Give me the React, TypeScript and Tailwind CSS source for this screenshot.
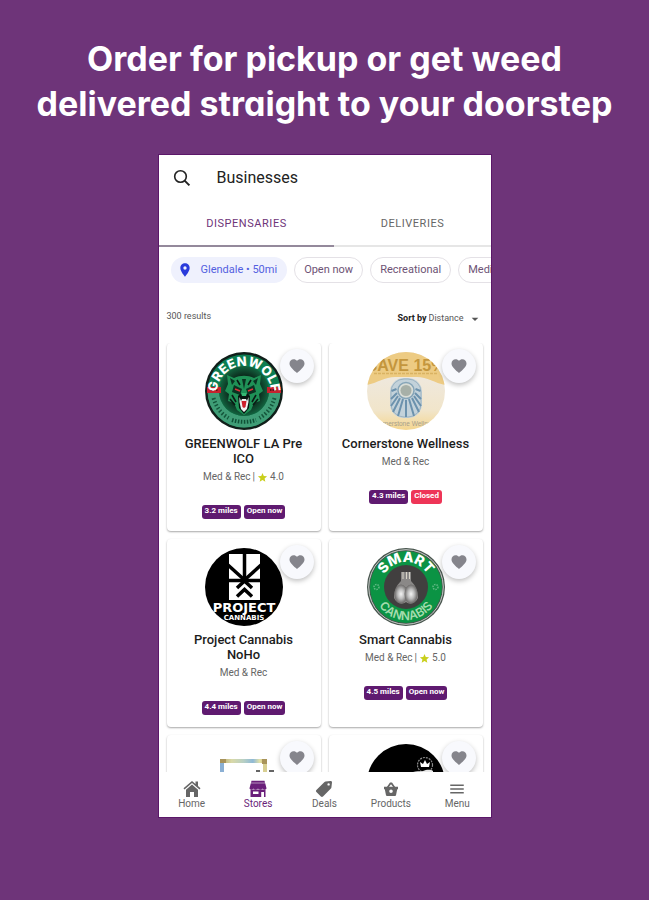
import React from 'react';
import { MdArrowDropDown, MdFavorite, MdMenu, MdPlace, MdStar } from 'react-icons/md';

type Store = {
  id: string;
  name: string;
  type: string;
  rating?: string;
  distance: string;
  open: boolean;
  Logo: React.FC;
};

const GreenwolfLogo: React.FC = () => (
  <svg viewBox="0 0 78 78" className="h-full w-full">
    <defs>
      <path id="gw-top" d="M12 41a27 27 0 0 1 54 0" />
      <radialGradient id="gw-glow">
        <stop offset="0.500" stopColor="#0a1712" />
        <stop offset="1" stopColor="#12643f" />
      </radialGradient>
    </defs>
    <circle cx="39" cy="39" r="39" fill="#111f1a" />
    <circle cx="39" cy="39" r="36.500" fill="#0d7d50" />
    <path d="M2.500 39a36.500 36.500 0 0 0 73 0H64a25 25 0 0 1-50 0z" fill="#3f9d76" />
    <circle cx="39" cy="39" r="25" fill="url(#gw-glow)" />
    <path d="M2 35h14v6H2zM62 35h14v6H62z" fill="#c5222e" />
    <path d="M6 38h7M65 38h7" stroke="#5c1016" strokeWidth="2" strokeDasharray="1.500 1" />
    <path d="M22 23l7 3c6-3 14-3 20 0l7-3-1 9 3 7-4 3 1 7-6 2-3 7-7 5-7-5-3-7-6-2 1-7-4-3 3-7z" fill="#1f9257" />
    <path d="M25 26l5 3-3 4zM53 26l-5 3 3 4zM37 27h4l-2 10zM29 33l8 4-2 6-8-3zM49 33l-8 4 2 6 8-3z" fill="#0b3322" />
    <path d="M30 37l5 2M48 37l-5 2" stroke="#e2343a" strokeWidth="1.500" />
    <path d="M27 43l4 7M51 43l-4 7M25 47l5 6M53 47l-5 6M32 28l3 5M46 28l-3 5" stroke="#0b1a14" strokeWidth="1.600" fill="none" />
    <path d="M33 44l3-3h6l3 3-1 12-5 6-5-6z" fill="#081510" />
    <path d="M36 41h6l-1 3h-4z" fill="#35b873" />
    <path d="M34.500 45l1.500 4 1-2h4l1 2 1.500-4v5l-1.500 7-3 3-3-3-1.500-7z" fill="#f2f2f2" />
    <path d="M36.500 49h5l-1 6-1.500 1-1.500-1z" fill="#d01f2c" />
    <text fill="#fff" fontFamily="Inter, sans-serif" fontWeight="800" fontSize="13">
      <textPath href="#gw-top" startOffset="50%" textAnchor="middle">GREENWOLF</textPath>
    </text>
    <path d="M8.500 46c3 10 8 16 15 20M69.500 46c-3 10-8 16-15 20" stroke="#14563b" strokeWidth="4" strokeDasharray="1.500 2" fill="none" />
    <path d="M27 68c8 2.500 16 2.500 24 0" stroke="#0f5036" strokeWidth="4" strokeDasharray="1.500 1.500" fill="none" />
  </svg>
);

const CornerstoneLogo: React.FC = () => (
  <svg viewBox="0 0 78 78" className="h-full w-full">
    <defs>
      <clipPath id="cs-clip">
        <circle cx="39" cy="39" r="39" />
      </clipPath>
      <linearGradient id="cs-bg" x1="0" y1="0" x2="0" y2="1">
        <stop offset="0.350" stopColor="#efe8dc" />
        <stop offset="0.750" stopColor="#f1e5ca" />
        <stop offset="1" stopColor="#f4d690" />
      </linearGradient>
    </defs>
    <g clipPath="url(#cs-clip)">
      <path d="M0 0h78v78H0z" fill="url(#cs-bg)" />
      <path d="M0 0h78v33C68 31 60 25 50 25H28C18 25 10 31 0 33z" fill="#edcb83" />
      <text x="39" y="18.500" textAnchor="middle" fill="#c4963d" fontFamily="Liberation Sans, sans-serif" fontWeight="700" fontSize="16">
        SAVE 15%
      </text>
      <path d="M7 21.500h64" stroke="#d9b262" strokeWidth="1.500" strokeDasharray="3 1" />
      <rect x="23" y="26" width="32" height="40" rx="14" fill="#c3d2da" />
      <rect x="24" y="27" width="30" height="38" rx="13" fill="none" stroke="#9db3c0" strokeWidth="1" />
      <g stroke="#6c92ad" strokeWidth="2">
        <path d="M39 48v17M36 47l-5 17M42 47l5 17M33 46l-7 14M45 46l7 14M31 44l-7 10M47 44l7 10M30 41l-6 6M48 41l6 6M29.500 37l-5 2M48.500 37l5 2" />
      </g>
      <circle cx="39" cy="38.500" r="8" fill="#d9ddd7" stroke="#86a5b8" strokeWidth="1.500" />
      <circle cx="39" cy="38.500" r="5.500" fill="#a7b0a8" />
      <text x="39" y="73.500" textAnchor="middle" fill="#a79e8b" fontFamily="Liberation Sans, sans-serif" fontSize="6.500">
        Cornerstone Wellness
      </text>
    </g>
  </svg>
);

const ProjectLogo: React.FC = () => (
  <svg viewBox="0 0 78 78" className="h-full w-full">
    <defs>
      <clipPath id="pc-clip">
        <circle cx="39" cy="39" r="39" />
      </clipPath>
    </defs>
    <g clipPath="url(#pc-clip)">
      <path d="M0 0h78v78H0z" fill="#000" />
      <path d="M24 6h31v46H24z" fill="#fff" />
      <g stroke="#000" fill="none">
        <path d="M39.500 5v27" strokeWidth="3.500" />
        <path d="M23 17l16.500 15L56 17" strokeWidth="3.500" />
        <path d="M23 32.500h33" strokeWidth="3.500" />
        <path d="M32 40l7.500-7 7.500 7" strokeWidth="3.500" />
        <path d="M32 48.500l7.500-7 7.500 7" strokeWidth="3.500" />
      </g>
      <g textAnchor="middle" fill="#fff" fontFamily="DejaVu Sans, sans-serif" fontWeight="700">
        <text x="39" y="63.500" fontSize="13">PROJECT</text>
        <text x="39" y="72" fontSize="7">CANNABIS</text>
      </g>
    </g>
  </svg>
);

const SmartLogo: React.FC = () => (
  <svg viewBox="0 0 78 78" className="h-full w-full">
    <defs>
      <path id="sc-top" d="M14 39a25 25 0 0 1 50 0" />
      <path id="sc-bottom" d="M6 39a33 33 0 0 0 66 0" />
      <radialGradient id="sc-bud">
        <stop offset="0" stopColor="#f4f4f4" />
        <stop offset="0.500" stopColor="#bdbdbd" />
        <stop offset="1" stopColor="#6b6968" />
      </radialGradient>
    </defs>
    <circle cx="39" cy="39" r="39" fill="#47544d" />
    <circle cx="39" cy="39" r="37.300" fill="none" stroke="#c7cdc9" strokeWidth="1" />
    <circle cx="39" cy="39" r="36" fill="#0b9344" />
    <circle cx="39" cy="39" r="22" fill="#413f3f" />
    <path d="M34 24h10v9c5 5 7 10 7 17-3 6-8 7-12 4-4 3-9 2-12-4 0-7 2-12 7-17z" fill="#8a8887" />
    <ellipse cx="34" cy="46" rx="6.500" ry="9.500" fill="url(#sc-bud)" />
    <ellipse cx="44" cy="46" rx="6.500" ry="9.500" fill="url(#sc-bud)" />
    <path d="M36 24v7M39.500 24v7M42.500 24v7" stroke="#d8d4c8" strokeWidth="1" />
    <circle cx="9.500" cy="39" r="2.500" fill="none" stroke="#62b985" strokeWidth="1.500" strokeDasharray="1.500 1" />
    <circle cx="68.500" cy="39" r="2.500" fill="none" stroke="#62b985" strokeWidth="1.500" strokeDasharray="1.500 1" />
    <g fontFamily="Inter, sans-serif" textAnchor="middle">
      <text fill="#fff" fontSize="14" fontWeight="800">
        <textPath href="#sc-top" startOffset="50%">SMART</textPath>
      </text>
      <text fill="#a5dcae" fontSize="12" fontWeight="600">
        <textPath href="#sc-bottom" startOffset="50%">CANNABIS</textPath>
      </text>
    </g>
  </svg>
);

const FrameLogo: React.FC = () => (
  <svg viewBox="0 0 78 78" className="h-full w-full">
    <defs>
      <linearGradient id="fr-foil">
        <stop offset="0" stopColor="#b5a468" />
        <stop offset="0.250" stopColor="#d9d9a8" />
        <stop offset="0.500" stopColor="#b8d0c4" />
        <stop offset="0.700" stopColor="#8fb9d6" />
        <stop offset="0.850" stopColor="#e6e3a6" />
        <stop offset="1" stopColor="#b59a5c" />
      </linearGradient>
    </defs>
    <path d="M15 15h47v4H15z" fill="url(#fr-foil)" />
    <path d="M15 19h4v30h-4z" fill="#8bb0d4" />
    <path d="M58 19h4v30h-4z" fill="#d8cf92" />
    <path d="M15 15h6v4h-6zM57 15h5v5h-5z" fill="#a8935a" />
    <path d="M51 27h4M64 27h5" stroke="#333" strokeWidth="1.500" />
  </svg>
);

const CrownLogo: React.FC = () => (
  <svg viewBox="0 0 78 78" className="h-full w-full">
    <circle cx="39" cy="39" r="39" fill="#000" />
    <circle cx="58" cy="21" r="7.500" fill="none" stroke="#8c8c8c" strokeWidth="1.200" strokeDasharray="2 1" />
    <path d="M54 23l-1-5 3 2 2-4 2 4 3-2-1 5z" fill="#fff" />
    <path d="M44 29c5-3 9-1 12-2s7-2 10 0v4H44z" fill="#e8e8e8" />
  </svg>
);

const stores: Store[] = [
  { id: 'greenwolf', name: 'GREENWOLF LA Pre ICO', type: 'Med & Rec', rating: '4.0', distance: '3.2 miles', open: true, Logo: GreenwolfLogo },
  { id: 'cornerstone', name: 'Cornerstone Wellness', type: 'Med & Rec', distance: '4.3 miles', open: false, Logo: CornerstoneLogo },
  { id: 'project', name: 'Project Cannabis NoHo', type: 'Med & Rec', distance: '4.4 miles', open: true, Logo: ProjectLogo },
  { id: 'smart', name: 'Smart Cannabis', type: 'Med & Rec', rating: '5.0', distance: '4.5 miles', open: true, Logo: SmartLogo },
];

const FavoriteButton: React.FC = () => (
  <button
    aria-label="Add to favorites"
    className="absolute top-1.5 right-[7px] flex h-[34px] w-[34px] items-center justify-center rounded-full bg-[#f8f9fd] text-[#85858c] shadow-[0_2px_5px_rgba(0,0,0,0.25)]"
  >
    <MdFavorite className="h-[18px] w-[18px]" />
  </button>
);

const cardClass =
  'relative flex h-[188px] flex-col items-center rounded-sm bg-white px-3 pt-[9px] text-center shadow-[0_1px_2px_rgba(0,0,0,0.35)]';

const StoreCard: React.FC<{ store: Store }> = ({ store }) => {
  const { name, type, rating, distance, open, Logo } = store;

  return (
    <article className={cardClass}>
      <div className="h-[78px] w-[78px]">
        <Logo />
      </div>
      <FavoriteButton />
      <h2 className="mt-1.5 text-[13px] leading-[15px] font-medium text-[#1c1c1c]">{name}</h2>
      <p className="mt-[3px] flex items-center text-[10px] leading-4 text-[#666]">
        {type}
        {rating && (
          <>
            <span className="mx-0.5">|</span>
            <MdStar className="mr-0.5 h-[11px] w-[11px] text-[#c9cf1c]" />
            {rating}
          </>
        )}
      </p>
      <div className="mt-5 flex gap-[3px] text-[8px] leading-3 font-bold text-white">
        <span className="h-3.5 rounded-[3px] bg-[#5f1a70] px-[3px]">{distance}</span>
        <span className={open ? 'h-3.5 rounded-[3px] bg-[#5f1a70] px-[3px]' : 'h-3.5 rounded-[3px] bg-[#ee3557] px-[3px]'}>
          {open ? 'Open now' : 'Closed'}
        </span>
      </div>
    </article>
  );
};

const SearchIcon: React.FC = () => (
  <svg viewBox="0 0 18 18" className="h-[18px] w-[18px]" fill="none" stroke="#222" strokeWidth="1.600">
    <circle cx="7.500" cy="7.500" r="5.800" />
    <path d="M11.600 11.600l4.800 4.800" strokeWidth="2" />
  </svg>
);

const HomeIcon: React.FC = () => (
  <svg viewBox="0 0 18 18" className="h-[18px] w-[18px]" fill="currentColor">
    <path d="M9 1l3.500 3V1.500H15v4.600l2.500 2.200-1 1.200L9 3.100 1.500 9.500l-1-1.200z" />
    <path d="M9 4.500l6 5.200V17h-4v-5H7v5H3V9.700z" />
  </svg>
);

const StoreIcon: React.FC = () => (
  <svg viewBox="0 0 18 18" className="h-[18px] w-[18px]" fill="currentColor">
    <path d="M2.500 .8h13l.5 2H2zM1.800 3.300h14.400l1.300 4.900c-.4 1.800-3 1.900-3.800.3-.7 1.500-3.700 1.500-4.700 0-1 1.500-4 1.500-4.700 0-.8 1.600-3.400 1.500-3.800-.3z" />
    <path
      fillRule="evenodd"
      d="M1.500 9.500h15V17H15v-5h-2.800v5H1.500zM4 11.500v2.500h5.500v-2.500z"
    />
  </svg>
);

const TagIcon: React.FC = () => (
  <svg viewBox="0 0 18 18" className="h-[18px] w-[18px]" fill="currentColor">
    <path
      fillRule="evenodd"
      d="M10.500 1.600l5-.6c.9-.1 1.600.6 1.500 1.500l-.6 5c0 .4-.2.700-.5 1L8 16.600c-.6.6-1.500.6-2.100 0L1.400 12c-.6-.6-.6-1.500 0-2.100L9.500 2c.3-.2.600-.4 1-.4zM13.600 3.200a1.200 1.200 0 1 0 0 2.400 1.200 1.200 0 0 0 0-2.400z"
    />
  </svg>
);

const BasketIcon: React.FC = () => (
  <svg viewBox="0 0 18 18" className="h-[18px] w-[18px]" fill="currentColor">
    <path d="M4.500 7.500L8 2.500h2l3.500 5h-2L9 4.300 6.500 7.500z" />
    <path fillRule="evenodd" d="M2 6.800h14v2.400h-.8l-1.200 6c-.1.500-.5.800-1 .8H5c-.5 0-.9-.3-1-.8l-1.200-6H2zM9 9.500a1.800 1.800 0 1 0 0 3.600 1.800 1.800 0 0 0 0-3.600z" />
  </svg>
);

const navItems = [
  { label: 'Home', icon: <HomeIcon /> },
  { label: 'Stores', icon: <StoreIcon />, active: true },
  { label: 'Deals', icon: <TagIcon /> },
  { label: 'Products', icon: <BasketIcon /> },
  { label: 'Menu', icon: <MdMenu className="h-[18px] w-[18px]" /> },
];

const filters = ['Open now', 'Recreational', 'Medical'];

export default function App() {
  return (
    <div className="flex h-screen min-h-[600px] flex-col items-center bg-[#6e3479] pt-9 pb-[83px]">
      <h1 className="px-4 text-center font-['Inter',sans-serif] text-[34px] leading-[45px] font-bold text-white [font-feature-settings:'cv11']">
        Order for pickup or get weed
        <br />
        delivered straight to your doorstep
      </h1>

      <div className="mt-[29px] flex min-h-0 w-full max-w-[332px] flex-1 flex-col bg-white font-['Roboto',sans-serif] shadow-[0_0_0_1px_#5b1769]">
        <header className="flex h-[46px] shrink-0 items-center gap-[26px] px-3.5">
          <button aria-label="Search">
            <SearchIcon />
          </button>
          <span className="text-base text-[#222]">Businesses</span>
        </header>

        <div role="tablist" className="flex h-[46px] shrink-0 text-[11px] tracking-wider">
          <button role="tab" aria-selected="true" className="w-[53%] border-b-2 border-[#94899b] pt-0.5 text-[#6e3479]">
            DISPENSARIES
          </button>
          <button role="tab" aria-selected="false" className="flex-1 border-b-2 border-[#e6e6e6] pt-0.5 text-[#666]">
            DELIVERIES
          </button>
        </div>

        <div className="mt-2.5 flex shrink-0 gap-[7px] overflow-hidden pl-3 text-[11px] whitespace-nowrap">
          <button className="flex h-[26px] items-center gap-1.5 rounded-full bg-[#eff1fd] pr-2 pl-1.5 text-[#5360e0]">
            <MdPlace className="h-4 w-4 text-[#2a3bdb]" />
            <span className="px-0.5">Glendale • 50mi</span>
          </button>
          {filters.map((filter) => (
            <button key={filter} className="h-[26px] shrink-0 rounded-full border border-[#e4e1e6] px-[9px] text-[#6d5375]">
              {filter}
            </button>
          ))}
        </div>

        <div className="mt-6 mb-4 flex h-5 shrink-0 items-center justify-between px-2 text-[9px] text-[#555]">
          <span>300 results</span>
          <div className="flex items-center gap-0.5 pt-1">
            <label htmlFor="sort" className="font-bold text-[#222]">
              Sort by
            </label>
            <select id="sort" className="appearance-none bg-transparent">
              <option>Distance</option>
            </select>
            <MdArrowDropDown className="h-4 w-4" />
          </div>
        </div>

        <main className="min-h-0 flex-1 overflow-hidden px-2">
          <div className="grid grid-cols-2 gap-2">
            {stores.map((store) => (
              <StoreCard key={store.id} store={store} />
            ))}
            <article className={cardClass}>
              <div className="h-[78px] w-[78px]">
                <FrameLogo />
              </div>
              <FavoriteButton />
            </article>
            <article className={cardClass}>
              <div className="h-[78px] w-[78px]">
                <CrownLogo />
              </div>
              <FavoriteButton />
            </article>
          </div>
        </main>

        <nav className="grid h-[45px] shrink-0 grid-cols-5 bg-white text-[10px] text-[#666]">
          {navItems.map(({ label, icon, active }) => (
            <a
              key={label}
              href="#"
              className={active ? 'flex flex-col items-center pt-2 leading-3 text-[#6a1f7a]' : 'flex flex-col items-center pt-2 leading-3'}
            >
              {icon}
              {label}
            </a>
          ))}
        </nav>
      </div>
    </div>
  );
}
